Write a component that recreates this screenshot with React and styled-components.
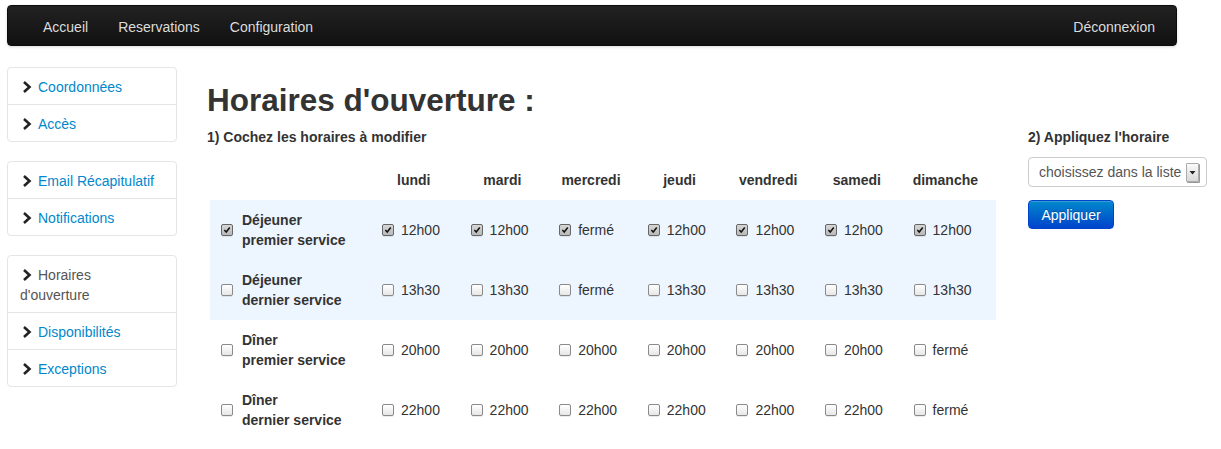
import React from 'react';
import styled, { createGlobalStyle } from 'styled-components';

const GlobalStyle = createGlobalStyle`
  body {
    margin: 0;
    background: #fff;
    font-family: "Liberation Sans", Arial, sans-serif;
    font-size: 14px;
    line-height: 20px;
    color: #333;
  }
`;

const Navbar = styled.div`
  display: flex;
  align-items: center;
  width: 1170px;
  height: 41px;
  margin: 5px 0 0 7px;
  padding: 2px 21px 0 20px;
  box-sizing: border-box;
  border-radius: 4px;
  background: linear-gradient(#222, #111);
  border: 1px solid #0c0c0c;
  box-shadow: 0 1px 3px rgba(0, 0, 0, 0.15);
`;

const NavLink = styled.a`
  padding: 10px 15px;
  color: #ddd;
  text-decoration: none;
  text-shadow: 0 -1px 0 rgba(0, 0, 0, 0.25);
  &:last-child {
    margin-left: auto;
    padding-right: 0;
  }
`;

const Layout = styled.div`
  display: flex;
  margin-top: 21px;
  padding-left: 7px;
`;

const Sidebar = styled.div`
  display: flex;
  flex-direction: column;
  gap: 19px;
  width: 170px;
  flex-shrink: 0;
`;

const NavGroup = styled.ul`
  margin: 0;
  padding: 0;
  list-style: none;
  border: 1px solid #e5e5e5;
  border-radius: 4px;
`;

const NavItem = styled.li`
  padding: 9px 12px 7px;
  border-top: 1px solid #e5e5e5;
  color: ${(p) => (p.active ? '#555' : '#0088cc')};
  &:first-child {
    border-top: 0;
  }
`;

const Chevron = styled.svg`
  display: inline-block;
  width: 14px;
  height: 14px;
  margin-right: 4px;
  vertical-align: -2px;
`;

const Main = styled.div`
  margin-left: 30px;
  flex: 1;
`;

const Title = styled.h1`
  margin: 13px 0 7px;
  font-size: 31.5px;
  line-height: 40px;
  font-weight: bold;
  color: #333;
`;

const Columns = styled.div`
  display: flex;
`;

const Step = styled.div`
  font-weight: bold;
  font-size: 14px;
  line-height: 20px;
`;

const Left = styled.div`
  width: 789px;
`;

const Right = styled.div`
  margin-left: 32px;
  width: 179px;
`;

const Table = styled.div`
  margin: 13px 0 0 3px;
  width: 786px;
`;

const Row = styled.div`
  display: grid;
  grid-template-columns: 163px repeat(7, 88.6px);
  height: ${(p) => (p.head ? 40 : 60)}px;
  align-items: center;
  background: ${(p) => (p.highlight ? '#edf5ff' : 'transparent')};
`;

const HeadCell = styled.div`
  font-weight: bold;
  text-align: center;
  padding-right: 7px;
`;

const LabelCell = styled.div`
  display: flex;
  align-items: center;
  padding-left: 11px;
  font-weight: bold;
  line-height: 20px;
`;

const Cell = styled.div`
  display: flex;
  align-items: center;
  padding-left: 9px;
`;

const Box = styled.span`
  display: inline-flex;
  align-items: center;
  justify-content: center;
  width: 10px;
  height: 10px;
  margin-right: ${(p) => p.gap}px;
  border: 1px solid ${(p) => (p.checked ? '#666' : '#8a8a8a')};
  border-radius: 2px;
  background: ${(p) =>
    p.checked ? 'linear-gradient(#d6d6d6, #b9b9b9)' : 'linear-gradient(#fff, #e6e6e6)'};
  box-shadow: 0 1px 0 rgba(0, 0, 0, 0.08);
  flex-shrink: 0;
`;

const Check = ({ checked, gap = 8 }) => (
  <Box checked={checked} gap={gap}>
    {checked && (
      <svg width="8" height="8" viewBox="0 0 9 9">
        <path d="M1.5 4.6 L3.6 6.8 L7.6 1.6" fill="none" stroke="#111" strokeWidth="1.7" />
      </svg>
    )}
  </Box>
);

const Select = styled.div`
  display: flex;
  align-items: center;
  justify-content: space-between;
  height: 30px;
  margin-top: 10px;
  padding: 0 7px 0 10px;
  box-sizing: border-box;
  border: 1px solid #ccc;
  border-radius: 4px;
  color: #555;
  font-size: 14px;
`;

const SelectArrow = styled.span`
  display: flex;
  align-items: center;
  justify-content: center;
  width: 11px;
  height: 17px;
  border: 1px solid #aaa;
  border-radius: 1px;
  background: linear-gradient(#fafafa, #d8d8d8);
  box-shadow: 1px 1px 0 #999;
`;

const Button = styled.button`
  display: block;
  margin-top: 13px;
  width: 86px;
  height: 29px;
  padding: 0;
  border: 1px solid #0044cc;
  border-radius: 4px;
  background: linear-gradient(#0088cc, #0044cc);
  color: #fff;
  font-family: inherit;
  font-size: 14px;
  text-shadow: 0 -1px 0 rgba(0, 0, 0, 0.25);
  box-shadow: inset 0 1px 0 rgba(255, 255, 255, 0.2);
`;

const ChevronIcon = () => (
  <Chevron viewBox="0 0 14 14">
    <path d="M4 2 L9.5 7 L4 12" fill="none" stroke="#222" strokeWidth="2.6" />
  </Chevron>
);

const days = ['lundi', 'mardi', 'mercredi', 'jeudi', 'vendredi', 'samedi', 'dimanche'];

const rows = [
  { title: 'Déjeuner', sub: 'premier service', checked: true, highlight: true,
    values: ['12h00', '12h00', 'fermé', '12h00', '12h00', '12h00', '12h00'] },
  { title: 'Déjeuner', sub: 'dernier service', checked: false, highlight: true,
    values: ['13h30', '13h30', 'fermé', '13h30', '13h30', '13h30', '13h30'] },
  { title: 'Dîner', sub: 'premier service', checked: false,
    values: ['20h00', '20h00', '20h00', '20h00', '20h00', '20h00', 'fermé'] },
  { title: 'Dîner', sub: 'dernier service', checked: false,
    values: ['22h00', '22h00', '22h00', '22h00', '22h00', '22h00', 'fermé'] },
];

const groups = [
  ['Coordonnées', 'Accès'],
  ['Email Récapitulatif', 'Notifications'],
  ['Horaires d\'ouverture', 'Disponibilités', 'Exceptions'],
];

const App = () => (
  <>
    <GlobalStyle />
    <Navbar>
      <NavLink>Accueil</NavLink>
      <NavLink>Reservations</NavLink>
      <NavLink>Configuration</NavLink>
      <NavLink>Déconnexion</NavLink>
    </Navbar>
    <Layout>
      <Sidebar>
        {groups.map((items, i) => (
          <NavGroup key={i}>
            {items.map((label) => (
              <NavItem key={label} active={label === "Horaires d'ouverture"}>
                <ChevronIcon />
                {label}
              </NavItem>
            ))}
          </NavGroup>
        ))}
      </Sidebar>
      <Main>
        <Title>Horaires d'ouverture :</Title>
        <Columns>
          <Left>
            <Step>1) Cochez les horaires à modifier</Step>
            <Table>
              <Row head>
                <div />
                {days.map((d) => (
                  <HeadCell key={d}>{d}</HeadCell>
                ))}
              </Row>
              {rows.map((r, i) => (
                <Row key={i} highlight={r.highlight}>
                  <LabelCell>
                    <Check checked={r.checked} gap={9} />
                    <div>
                      {r.title}
                      <br />
                      {r.sub}
                    </div>
                  </LabelCell>
                  {r.values.map((v, j) => (
                    <Cell key={j}>
                      <Check checked={r.checked} gap={7} />
                      {v}
                    </Cell>
                  ))}
                </Row>
              ))}
            </Table>
          </Left>
          <Right>
            <Step>2) Appliquez l'horaire</Step>
            <Select>
              choisissez dans la liste
              <SelectArrow>
                <svg width="7" height="5" viewBox="0 0 7 5">
                  <path d="M0.5 1 L6.5 1 L3.5 4.5 Z" fill="#222" />
                </svg>
              </SelectArrow>
            </Select>
            <Button>Appliquer</Button>
          </Right>
        </Columns>
      </Main>
    </Layout>
  </>
);

export default App;
